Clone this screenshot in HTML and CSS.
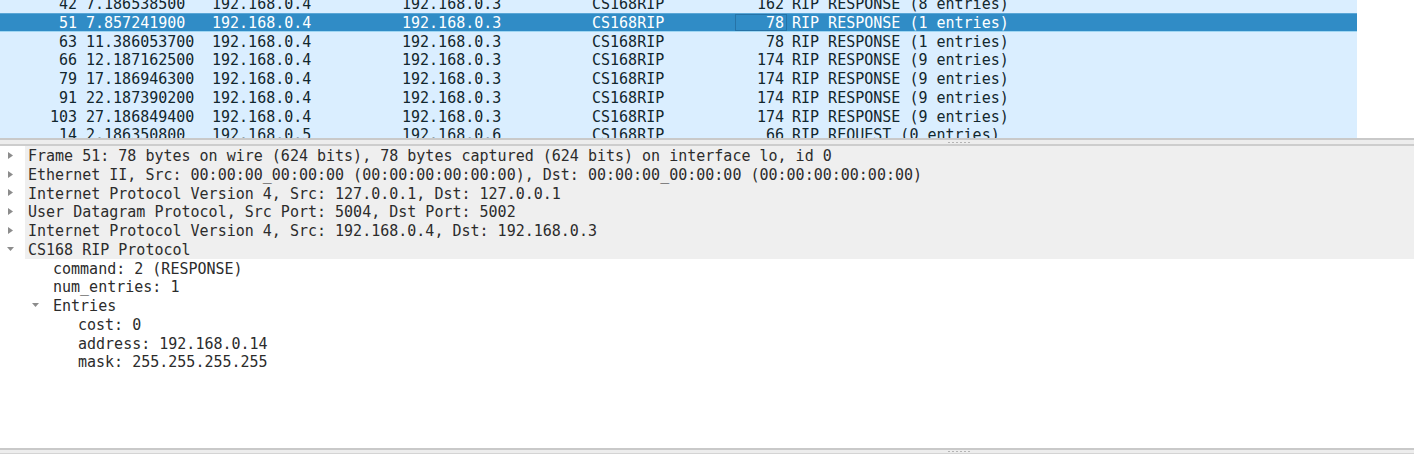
FILE: index.html
```html
<!DOCTYPE html>
<html>
<head>
<meta charset="utf-8">
<link rel="stylesheet" href="styles.css">
</head>
<body>
<div class="app">
  <div class="packet-pane">
    <div class="packet-list">
      <div class="prow"><span class="c-no">42</span><span class="c-time">7.186538500</span><span class="c-src">192.168.0.4</span><span class="c-dst">192.168.0.3</span><span class="c-proto">CS168RIP</span><span class="c-len">162</span><span class="c-info">RIP RESPONSE (8 entries)</span></div>
      <div class="prow sel"><span class="c-no">51</span><span class="c-time">7.857241900</span><span class="c-src">192.168.0.4</span><span class="c-dst">192.168.0.3</span><span class="c-proto">CS168RIP</span><span class="c-len focus">78</span><span class="c-info">RIP RESPONSE (1 entries)</span></div>
      <div class="prow"><span class="c-no">63</span><span class="c-time">11.386053700</span><span class="c-src">192.168.0.4</span><span class="c-dst">192.168.0.3</span><span class="c-proto">CS168RIP</span><span class="c-len">78</span><span class="c-info">RIP RESPONSE (1 entries)</span></div>
      <div class="prow"><span class="c-no">66</span><span class="c-time">12.187162500</span><span class="c-src">192.168.0.4</span><span class="c-dst">192.168.0.3</span><span class="c-proto">CS168RIP</span><span class="c-len">174</span><span class="c-info">RIP RESPONSE (9 entries)</span></div>
      <div class="prow"><span class="c-no">79</span><span class="c-time">17.186946300</span><span class="c-src">192.168.0.4</span><span class="c-dst">192.168.0.3</span><span class="c-proto">CS168RIP</span><span class="c-len">174</span><span class="c-info">RIP RESPONSE (9 entries)</span></div>
      <div class="prow"><span class="c-no">91</span><span class="c-time">22.187390200</span><span class="c-src">192.168.0.4</span><span class="c-dst">192.168.0.3</span><span class="c-proto">CS168RIP</span><span class="c-len">174</span><span class="c-info">RIP RESPONSE (9 entries)</span></div>
      <div class="prow"><span class="c-no">103</span><span class="c-time">27.186849400</span><span class="c-src">192.168.0.4</span><span class="c-dst">192.168.0.3</span><span class="c-proto">CS168RIP</span><span class="c-len">174</span><span class="c-info">RIP RESPONSE (9 entries)</span></div>
      <div class="prow"><span class="c-no">14</span><span class="c-time">2.186350800</span><span class="c-src">192.168.0.5</span><span class="c-dst">192.168.0.6</span><span class="c-proto">CS168RIP</span><span class="c-len">66</span><span class="c-info">RIP REQUEST (0 entries)</span></div>
    </div>
  </div>

  <div class="splitter"><div class="grip"></div></div>

  <div class="detail-pane">
    <div class="drow top"><span class="twisty"><svg width="5" height="7" viewBox="0 0 5 7"><polygon points="0,0 5,3.5 0,7" fill="#8c8c8c"/></svg></span><span class="label">Frame 51: 78 bytes on wire (624 bits), 78 bytes captured (624 bits) on interface lo, id 0</span></div>
    <div class="drow top"><span class="twisty"><svg width="5" height="7" viewBox="0 0 5 7"><polygon points="0,0 5,3.5 0,7" fill="#8c8c8c"/></svg></span><span class="label">Ethernet II, Src: 00:00:00_00:00:00 (00:00:00:00:00:00), Dst: 00:00:00_00:00:00 (00:00:00:00:00:00)</span></div>
    <div class="drow top"><span class="twisty"><svg width="5" height="7" viewBox="0 0 5 7"><polygon points="0,0 5,3.5 0,7" fill="#8c8c8c"/></svg></span><span class="label">Internet Protocol Version 4, Src: 127.0.0.1, Dst: 127.0.0.1</span></div>
    <div class="drow top"><span class="twisty"><svg width="5" height="7" viewBox="0 0 5 7"><polygon points="0,0 5,3.5 0,7" fill="#8c8c8c"/></svg></span><span class="label">User Datagram Protocol, Src Port: 5004, Dst Port: 5002</span></div>
    <div class="drow top"><span class="twisty"><svg width="5" height="7" viewBox="0 0 5 7"><polygon points="0,0 5,3.5 0,7" fill="#8c8c8c"/></svg></span><span class="label">Internet Protocol Version 4, Src: 192.168.0.4, Dst: 192.168.0.3</span></div>
    <div class="drow top"><span class="twisty open"><svg width="7" height="4" viewBox="0 0 7 4"><polygon points="0,0 7,0 3.5,4" fill="#8c8c8c"/></svg></span><span class="label">CS168 RIP Protocol</span></div>
    <div class="drow l1"><span class="twisty"></span><span class="label">command: 2 (RESPONSE)</span></div>
    <div class="drow l1"><span class="twisty"></span><span class="label">num_entries: 1</span></div>
    <div class="drow l1"><span class="twisty open"><svg width="7" height="4" viewBox="0 0 7 4"><polygon points="0,0 7,0 3.5,4" fill="#8c8c8c"/></svg></span><span class="label">Entries</span></div>
    <div class="drow l2"><span class="twisty"></span><span class="label">cost: 0</span></div>
    <div class="drow l2"><span class="twisty"></span><span class="label">address: 192.168.0.14</span></div>
    <div class="drow l2"><span class="twisty"></span><span class="label">mask: 255.255.255.255</span></div>
  </div>

  <div class="splitter bottom"><div class="grip"></div></div>
</div>
</body>
</html>
```
FILE: styles.css
```css
html, body {
  margin: 0;
  padding: 0;
  background: #ffffff;
}

.app {
  width: 1414px;
  height: 454px;
  display: flex;
  flex-direction: column;
  overflow: hidden;
  font-family: "DejaVu Sans Mono", "Liberation Mono", monospace;
  font-size: 15px;
}

/* ---------- packet list ---------- */
.packet-pane {
  height: 138px;
  flex: none;
  overflow: hidden;
  background: #ffffff;
}

.packet-list {
  width: 1357px;
  margin-top: -6px;
  background: #daeeff;
}

.prow {
  display: grid;
  grid-template-columns: 80px 126px 190px 190px 149px 52px 1fr;
  height: 18.75px;
  color: #12272e;
  background: #daeeff;
  white-space: nowrap;
  box-sizing: border-box;
}

.prow > span {
  padding-left: 6px;
  padding-top: 2px;
  line-height: 16.75px;
  overflow: hidden;
  box-sizing: border-box;
}

.prow .c-no {
  text-align: right;
  padding-left: 0;
  padding-right: 3px;
}

.prow .c-len {
  text-align: right;
  padding-left: 0;
  padding-right: 3px;
}

.prow .c-info {
  padding-left: 5px;
}

.prow.sel {
  background: #308cc6;
  color: #ffffff;
  border-top: 1px solid #5aa6d6;
  border-bottom: 1px solid #9fd6f2;
}

.prow.sel > span {
  padding-top: 2px;
  line-height: 14.75px;
}

.prow.sel .focus {
  box-shadow: inset 0 0 0 1px rgba(20, 70, 110, 0.35);
}

/* ---------- splitters ---------- */
.splitter {
  flex: none;
  height: 8px;
  box-sizing: border-box;
  background: #ededed;
  border-top: 2px solid #c9c9c9;
  border-bottom: 2px solid #cdcdcd;
  display: flex;
  align-items: center;
}

.splitter.bottom {
  height: 6px;
  border-bottom: 1px solid #d4d4d4;
  margin-top: auto;
}

.grip {
  margin-left: 948px;
  width: 22px;
  height: 1px;
  background: repeating-linear-gradient(90deg, #b4b4b4 0 2px, transparent 2px 4px);
}

/* ---------- detail tree ---------- */
.detail-pane {
  flex: none;
  color: #2c2c2c;
}

.drow {
  display: flex;
  height: 18.75px;
  white-space: nowrap;
}

.drow.l1 {
  padding-left: 25px;
}

.drow.l2 {
  padding-left: 50px;
}

.twisty {
  flex: none;
  width: 25px;
  display: flex;
  align-items: center;
  padding-left: 8px;
  box-sizing: border-box;
}

.twisty.open {
  padding-left: 7px;
}

.twisty svg {
  display: block;
}

.label {
  flex: 1;
  padding-left: 3px;
  padding-top: 2px;
  line-height: 16.75px;
  box-sizing: border-box;
}

.drow.top .label {
  background: #efefef;
}
```
